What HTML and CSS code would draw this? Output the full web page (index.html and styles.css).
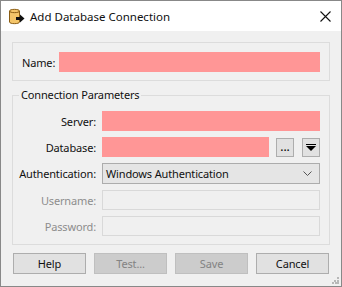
FILE: index.html
```html
<!DOCTYPE html>
<html lang="en">
<head>
    <meta charset="UTF-8">
    <title>Add Database Connection</title>
    <link rel="stylesheet" href="styles.css">
</head>
<body>
    <div class="window">
        <div class="titlebar">
            <svg class="app-icon" width="16" height="17" viewBox="0 0 16 17">
                <path d="M0.5 3 C0.5 0.8 10.5 0.8 10.5 3 L10.5 14 C10.5 16.2 0.5 16.2 0.5 14 Z" fill="#f4c569" stroke="#8a5d14"/>
                <path d="M0.5 3 C0.5 5.2 10.5 5.2 10.5 3" fill="none" stroke="#8a5d14"/>
                <path d="M7 9 H11 V6.5 L15.5 10.5 L11 14.5 V12 H7 Z" fill="#111"/>
            </svg>
            <span class="title">Add Database Connection</span>
            <svg class="close" width="11" height="11" viewBox="0 0 11 11">
                <path d="M0.5 0.5 L10.5 10.5 M10.5 0.5 L0.5 10.5" stroke="#111" stroke-width="1.1"/>
            </svg>
        </div>
        <div class="content">
            <div class="group name-group">
                <label class="name-label">Name:</label>
                <div class="field required"></div>
            </div>
            <fieldset class="group params">
                <legend>Connection Parameters</legend>
                <div class="form-grid">
                    <label>Server:</label>
                    <div class="field required"></div>
                    <label>Database:</label>
                    <div class="db-row">
                        <div class="field required"></div>
                        <button class="small-btn dots">...</button>
                        <button class="small-btn">
                            <svg width="10" height="7" viewBox="0 0 10 7">
                                <rect x="0" y="0" width="10" height="1" fill="#000"/>
                                <path d="M0 2 H10 L5 7 Z" fill="#000"/>
                            </svg>
                        </button>
                    </div>
                    <label>Authentication:</label>
                    <div class="combo">
                        <span>Windows Authentication</span>
                        <svg width="9" height="5" viewBox="0 0 9 5">
                            <path d="M0.5 0.5 L4.5 4.5 L8.5 0.5" fill="none" stroke="#555"/>
                        </svg>
                    </div>
                    <label class="off">Username:</label>
                    <div class="field disabled"></div>
                    <label class="off">Password:</label>
                    <div class="field disabled"></div>
                </div>
            </fieldset>
            <div class="buttons">
                <button class="button">Help</button>
                <button class="button" disabled>Test...</button>
                <button class="button" disabled>Save</button>
                <button class="button">Cancel</button>
            </div>
        </div>
        <svg class="grip" width="7" height="7" viewBox="0 0 7 7">
            <rect x="5" y="0" width="2" height="2" fill="#b8b8b8"/>
            <rect x="2" y="3" width="2" height="2" fill="#b8b8b8"/>
            <rect x="5" y="3" width="2" height="2" fill="#b8b8b8"/>
            <rect x="0" y="5" width="2" height="2" fill="#b8b8b8"/>
            <rect x="3" y="5" width="2" height="2" fill="#b8b8b8"/>
            <rect x="5" y="5" width="2" height="2" fill="#b8b8b8"/>
        </svg>
    </div>
</body>
</html>
```
FILE: styles.css
```css
body {
    margin: 0;
    font-family: 'Noto Sans', 'Open Sans', sans-serif;
    font-size: 11px;
    letter-spacing: -0.15px;
    color: #111;
}
.window {
    position: relative;
    width: 342px;
    height: 287px;
    box-sizing: border-box;
    border: 1px solid #888;
    display: flex;
    flex-direction: column;
    background: #f0f0f0;
}
.titlebar {
    height: 30px;
    background: #fff;
    display: flex;
    align-items: center;
    padding-left: 8px;
}
.app-icon {
    flex: none;
    margin-top: 1px;
}
.title {
    margin-left: 5px;
    font-size: 11.5px;
    letter-spacing: 0;
    flex: 1;
}
.close {
    margin-right: 10px;
}
.content {
    flex: 1;
    padding: 11px 11px 0 11px;
    display: flex;
    flex-direction: column;
}
.group {
    border: 1px solid #dcdcdc;
}
.name-group {
    display: flex;
    align-items: center;
    padding: 9px 9px 8px 9px;
}
.name-label {
    width: 37px;
    flex: none;
}
.field {
    height: 20px;
    box-sizing: border-box;
    flex: 1;
}
.field.required {
    background: #ff9696;
}
.field.disabled {
    border: 1px solid #d9d9d9;
    background: #f0f0f0;
}
.params {
    margin: 6px 0 0 0;
    padding: 0 9px 8px 0;
    min-width: 0;
}
.params legend {
    margin-left: 6px;
    padding: 0 2px;
    line-height: 16px;
}
.form-grid {
    display: grid;
    grid-template-columns: 83px 1fr;
    column-gap: 6px;
    row-gap: 6px;
    padding-top: 8px;
    align-items: center;
}
.form-grid label {
    text-align: right;
}
.form-grid label.off {
    color: #8d8d8d;
}
.db-row {
    display: flex;
    align-items: center;
}
.small-btn {
    width: 18px;
    height: 19px;
    margin-top: 1px;
    padding: 0;
    border: 1px solid #adadad;
    background: #e1e1e1;
    display: flex;
    align-items: center;
    justify-content: center;
    font-family: 'Noto Sans', sans-serif;
    font-size: 12px;
    line-height: 1;
}
.small-btn.dots {
    margin-left: 7px;
    margin-right: 8px;
    align-items: flex-end;
    padding-bottom: 3px;
}
.combo {
    height: 21px;
    box-sizing: border-box;
    border: 1px solid #acacac;
    background: #e5e5e5;
    display: flex;
    align-items: center;
    justify-content: space-between;
    padding: 0 7px 0 3px;
}
.buttons {
    display: flex;
    justify-content: space-between;
    padding: 0 1px;
    margin-top: 8px;
}
.button {
    width: 73px;
    height: 21px;
    padding: 0;
    border: 1px solid #adadad;
    background: #e1e1e1;
    color: #111;
    font-family: 'Noto Sans', sans-serif;
    font-size: 11px;
    letter-spacing: -0.15px;
}
.button:disabled {
    background: #cccccc;
    border-color: #bfbfbf;
    color: #838383;
}
.grip {
    position: absolute;
    right: 2px;
    bottom: 2px;
}
```
